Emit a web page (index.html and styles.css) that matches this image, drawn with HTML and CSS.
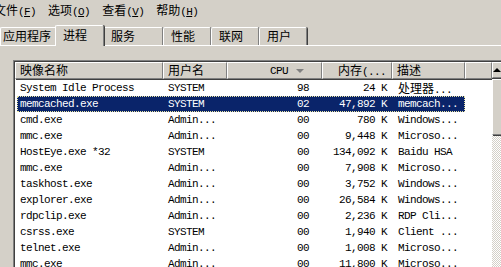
FILE: index.html
```html
<!DOCTYPE html>
<html lang="zh-CN">
<head>
    <meta charset="UTF-8">
    <title>Windows 任务管理器</title>
    <link rel="stylesheet" href="styles.css">
</head>
<body>
<div class="menubar">
    <span class="menu-item">文件<span class="mono">(<u>F</u>)</span></span>
    <span class="menu-item">选项<span class="mono">(<u>O</u>)</span></span>
    <span class="menu-item">查看<span class="mono">(<u>V</u>)</span></span>
    <span class="menu-item">帮助<span class="mono">(<u>H</u>)</span></span>
</div>
<div class="tabs">
    <div class="tab tab-apps">应用程序</div>
    <div class="tab tab-active">进程</div>
    <div class="tab tab-services">服务</div>
    <div class="tab">性能</div>
    <div class="tab">联网</div>
    <div class="tab">用户</div>
</div>
<div class="panel">
    <div class="listview">
        <div class="list-main">
            <div class="list-header">
                <div class="hcell">映像名称</div>
                <div class="hcell">用户名</div>
                <div class="hcell hcell-cpu"><span class="mono">CPU</span><span class="sort-arrow"></span></div>
                <div class="hcell hcell-right">内存<span class="mono">(...</span></div>
                <div class="hcell">描述</div>
                <div class="hcell"></div>
            </div>
            <div class="rows">
                <div class="row"><span>System Idle Process</span><span>SYSTEM</span><span class="num cpu">98</span><span class="num">24 K</span><span class="cjk">处理器<span class="mono">...</span></span></div>
                <div class="row selected"><span>memcached.exe</span><span>SYSTEM</span><span class="num cpu">02</span><span class="num">47,892 K</span><span>memcach...</span></div>
                <div class="row"><span>cmd.exe</span><span>Admin...</span><span class="num cpu">00</span><span class="num">780 K</span><span>Windows...</span></div>
                <div class="row"><span>mmc.exe</span><span>Admin...</span><span class="num cpu">00</span><span class="num">9,448 K</span><span>Microso...</span></div>
                <div class="row"><span>HostEye.exe *32</span><span>SYSTEM</span><span class="num cpu">00</span><span class="num">134,092 K</span><span>Baidu HSA</span></div>
                <div class="row"><span>mmc.exe</span><span>Admin...</span><span class="num cpu">00</span><span class="num">7,908 K</span><span>Microso...</span></div>
                <div class="row"><span>taskhost.exe</span><span>Admin...</span><span class="num cpu">00</span><span class="num">3,752 K</span><span>Windows...</span></div>
                <div class="row"><span>explorer.exe</span><span>Admin...</span><span class="num cpu">00</span><span class="num">26,584 K</span><span>Windows...</span></div>
                <div class="row"><span>rdpclip.exe</span><span>Admin...</span><span class="num cpu">00</span><span class="num">2,236 K</span><span>RDP Cli...</span></div>
                <div class="row"><span>csrss.exe</span><span>SYSTEM</span><span class="num cpu">00</span><span class="num">1,940 K</span><span>Client ...</span></div>
                <div class="row"><span>telnet.exe</span><span>Admin...</span><span class="num cpu">00</span><span class="num">1,008 K</span><span>Microso...</span></div>
                <div class="row"><span>mmc.exe</span><span>Admin...</span><span class="num cpu">00</span><span class="num">11,800 K</span><span>Microso...</span></div>
            </div>
        </div>
        <div class="vscroll">
            <div class="scroll-btn"><span class="up-arrow"></span></div>
            <div class="scroll-thumb"></div>
            <div class="scroll-track"></div>
        </div>
    </div>
</div>
</body>
</html>
```
FILE: styles.css
```css
body {
    margin: 0;
    width: 501px;
    height: 267px;
    overflow: hidden;
    background: #d4d0c8;
    color: #000;
    font-family: "Noto Sans CJK SC", sans-serif;
    font-size: 12px;
}
.mono {
    font-family: "Liberation Mono", monospace;
    font-size: 11px;
    letter-spacing: -0.6px;
}
.menubar {
    height: 20px;
    display: flex;
    align-items: center;
    gap: 12px;
    margin-left: -6px;
    padding-top: 1px;
    box-sizing: border-box;
    line-height: 14px;
}
.menu-item {
    white-space: nowrap;
}
.tabs {
    height: 25px;
    display: flex;
    align-items: flex-end;
    position: relative;
    z-index: 1;
}
.tab {
    box-sizing: border-box;
    width: 48px;
    height: 18px;
    padding-left: 7px;
    line-height: 16px;
    border-left: 1px solid #fff;
    border-top: 1px solid #fff;
    border-right: 1px solid #808080;
    box-shadow: 1px 0 0 #404040;
    border-radius: 2px 2px 0 0;
    white-space: nowrap;
}
.tab-apps {
    width: 57px;
    padding-left: 2px;
}
.tab-services {
    width: 61px;
    padding-left: 8px;
}
.tab-active {
    width: 49px;
    height: 21px;
    margin: 0 -2px -1px;
    padding-left: 7px;
    line-height: 17px;
    background: #d4d0c8;
    position: relative;
    z-index: 2;
}
.panel {
    border-top: 1px solid #fff;
    padding: 14px 0 0 13px;
}
.listview {
    display: flex;
    width: 500px;
    height: 220px;
    box-sizing: border-box;
    background: #fff;
    border-top: 1px solid #808080;
    border-left: 1px solid #808080;
    box-shadow: inset 1px 1px 0 #404040;
    padding: 1px 0 0 1px;
}
.list-main {
    width: 477px;
}
.list-header {
    display: grid;
    grid-template-columns: 148px 64px 95px 70px 73px 27px;
    height: 17px;
}
.hcell {
    box-sizing: border-box;
    background: #d4d0c8;
    border-left: 1px solid #fff;
    border-top: 1px solid #fff;
    border-right: 1px solid #808080;
    border-bottom: 1px solid #808080;
    box-shadow: 1px 1px 0 #404040;
    padding-left: 4px;
    line-height: 14px;
    white-space: nowrap;
    overflow: hidden;
}
.hcell-cpu {
    display: flex;
    align-items: center;
    justify-content: flex-end;
    padding-right: 17px;
    gap: 8px;
}
.sort-arrow {
    width: 0;
    height: 0;
    border-left: 4px solid transparent;
    border-right: 4px solid transparent;
    border-top: 4px solid #808080;
}
.hcell-right {
    text-align: right;
    padding-right: 5px;
}
.rows {
    padding-top: 1px;
}
.row {
    display: grid;
    grid-template-columns: 146px 64px 95px 70px 73px;
    width: 448px;
    height: 16px;
    margin-left: 2px;
    line-height: 16px;
    font-family: "Liberation Mono", "Noto Sans CJK SC", monospace;
    font-size: 11px;
    letter-spacing: -0.6px;
}
.row span {
    white-space: nowrap;
    overflow: hidden;
}
.row > span:first-child {
    padding-left: 3px;
}
.row > span:nth-child(2) {
    padding-left: 5px;
}
.row > span:nth-child(5) {
    padding-left: 6px;
}
.row .num {
    text-align: right;
    padding-right: 5px;
}
.row .cpu {
    padding-right: 13px;
}
.row .cjk {
    font-family: "Noto Sans CJK SC", sans-serif;
    font-size: 12px;
    letter-spacing: 0;
}
.row.selected {
    background: #0a246a;
    color: #fff;
    outline: 1px dotted #e8e4a0;
    outline-offset: -1px;
}
.vscroll {
    width: 16px;
    display: flex;
    flex-direction: column;
}
.scroll-btn,
.scroll-thumb {
    box-sizing: border-box;
    background: #d4d0c8;
    border-left: 1px solid #fff;
    border-top: 1px solid #fff;
    border-right: 1px solid #808080;
    border-bottom: 1px solid #808080;
    box-shadow: 1px 1px 0 #404040;
}
.scroll-btn {
    height: 16px;
    display: flex;
    align-items: center;
    justify-content: center;
    padding-right: 6px;
}
.up-arrow {
    width: 0;
    height: 0;
    border-left: 4px solid transparent;
    border-right: 4px solid transparent;
    border-bottom: 4px solid #000;
}
.scroll-thumb {
    height: 56px;
    margin-top: 1px;
}
.scroll-track {
    flex: 1;
    margin-top: 1px;
    background: repeating-conic-gradient(#fff 0 25%, #d4d0c8 0 50%) 0 0 / 2px 2px;
}
```
